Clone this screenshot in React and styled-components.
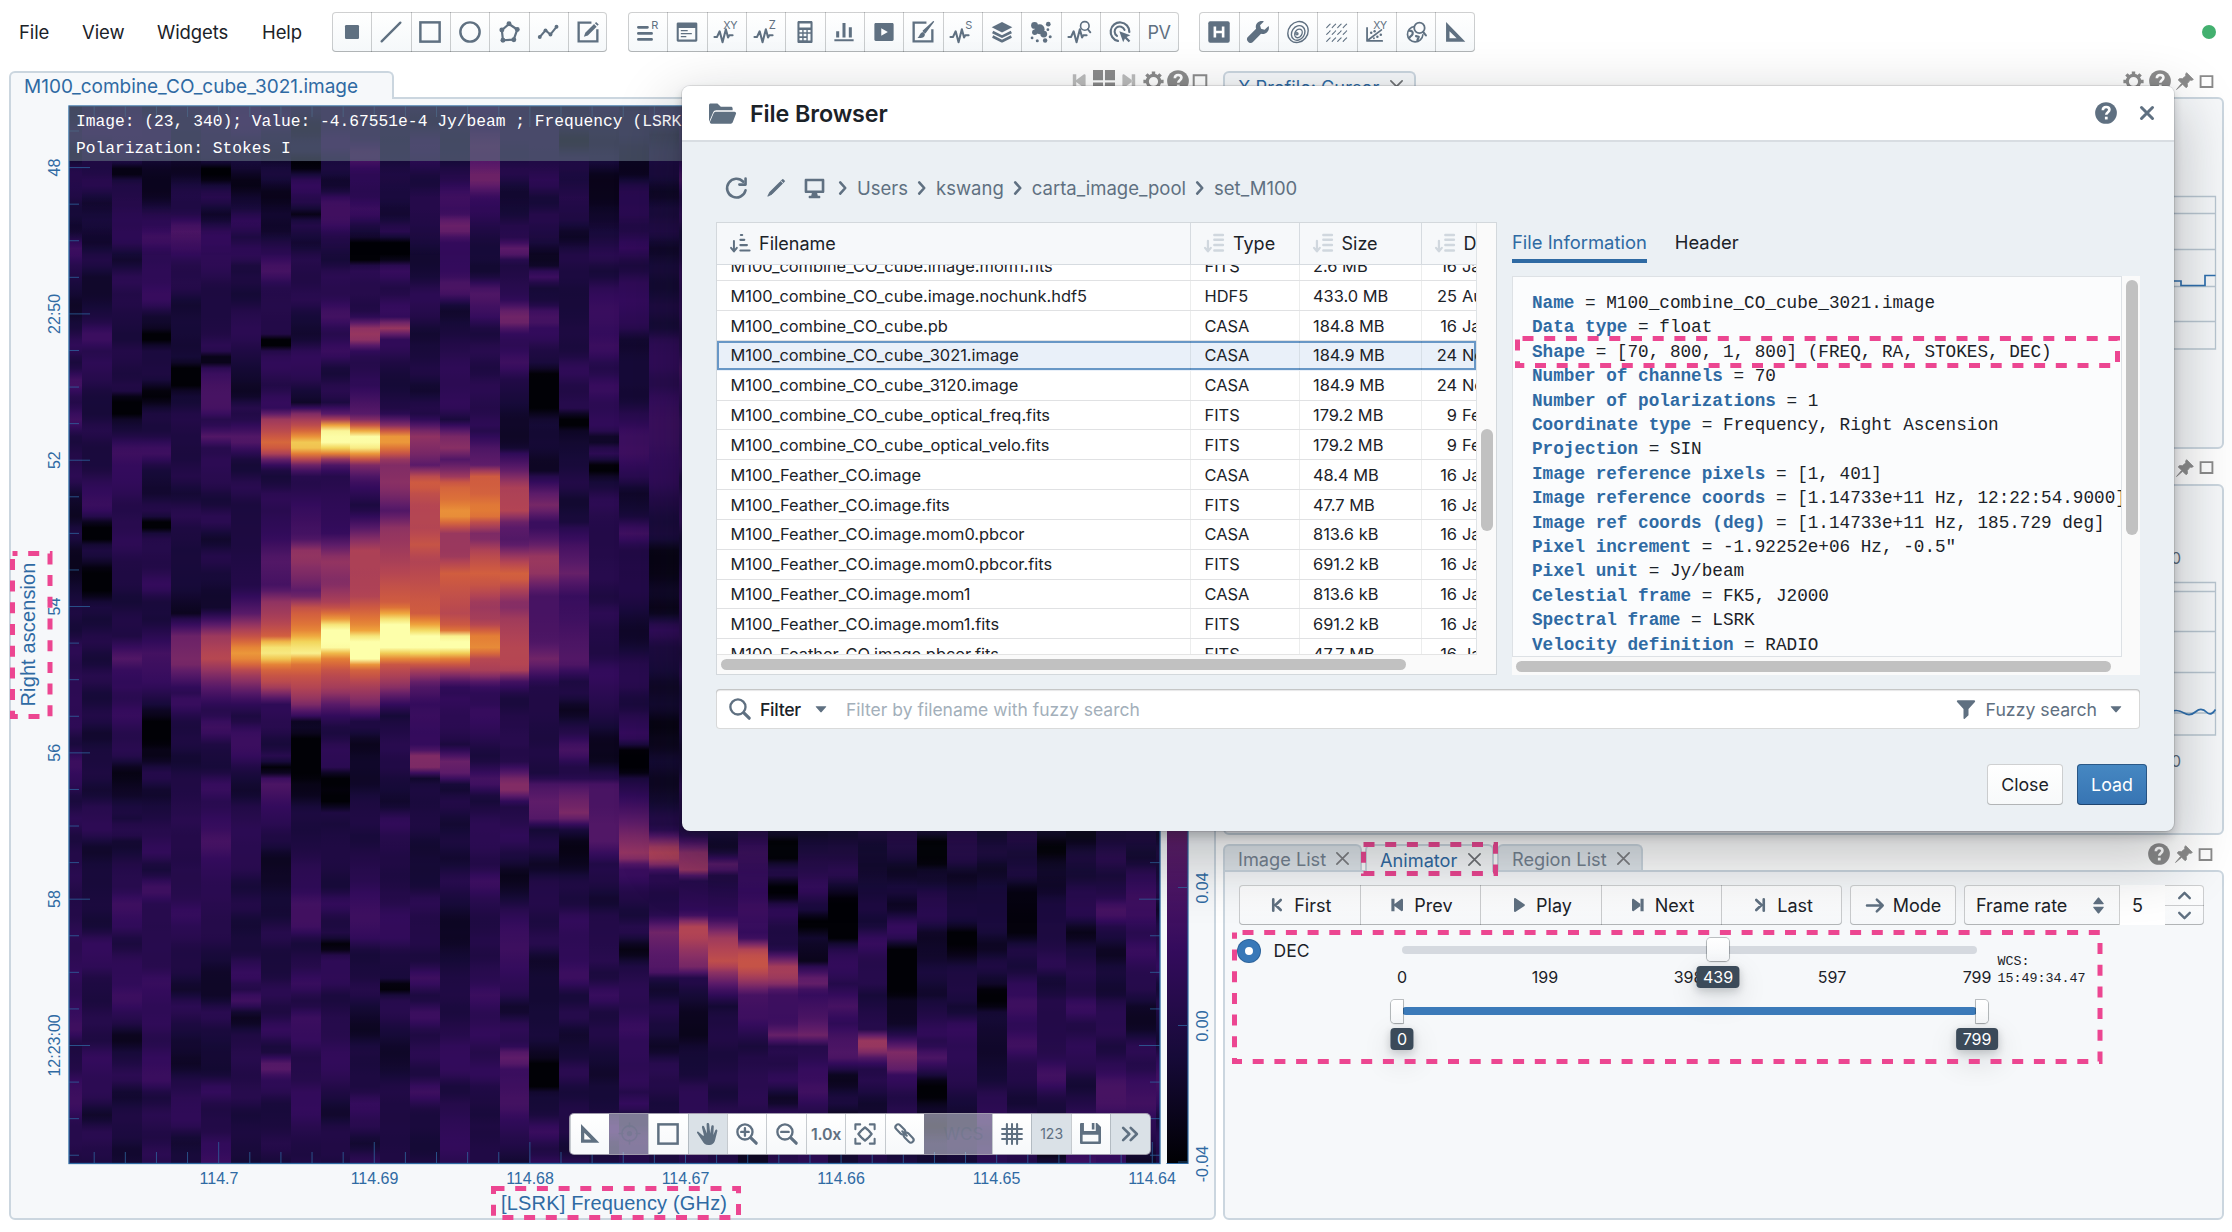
import React from "react";
import styled, { createGlobalStyle } from "styled-components";

const GlobalStyle = createGlobalStyle`
  * { box-sizing: border-box; }
  body { margin: 0; background: #fff; overflow: hidden; }
  body, button, input { font-family: Inter, "Liberation Sans", sans-serif; }
  svg { display: block; flex: none; }
`;

const C = {
  icon: "#5f7081",
  text: "#1b2228",
  blue: "#2f6aa3",
  border: "#cbd6df",
  panel: "#f6f8fa",
  pink: "#ec4691",
  control: "inset 0 0 0 1px rgba(16,22,26,.2), inset 0 -1px 0 rgba(16,22,26,.12)",
};
const MONO = '"Liberation Mono", "Courier New", monospace';

/* ---------- icons (16 unit grid) ---------- */

const stroke = (w = 1.6, extra = {}) => ({
  fill: "none", stroke: "currentColor", strokeWidth: w, strokeLinecap: "round", strokeLinejoin: "round", ...extra,
});
const sup = (t, x = 9.4, size = 8) => (
  <text x={x} y="5.6" fontSize={size} fontFamily="Inter, sans-serif" fill="currentColor">{t}</text>
);
const pulse = <path d="M.6 10.5h1.8l2-4.2 2.1 8L8.9 4.8l1.6 6 .9-1.6h2.4" {...stroke(1.5)} />;

const ICONS = {
  point: <rect x="2.9" y="2.9" width="10.2" height="10.2" rx="1" />,
  line: <path d="M1.2 14.8L14.8 1.2" {...stroke(1.7)} />,
  rect: <rect x="1" y="1" width="14" height="14" {...stroke(1.8, { strokeLinejoin: "miter" })} />,
  circle: <circle cx="8" cy="8" r="7" {...stroke(1.8)} />,
  polygon: <g><path d="M8 2.2l6 4-2.6 7.3-7.8.5L2.8 6.6z" {...stroke(1.6)} /><circle cx="8" cy="2" r="1.8" /><circle cx="14" cy="6.2" r="1.8" /><circle cx="2.8" cy="6.6" r="1.8" /><circle cx="3.6" cy="14" r="1.8" /><circle cx="11.5" cy="13.6" r="1.8" /></g>,
  polyline: <g><path d="M2 11.6L6.2 6.8l3.6 3 4.4-5.6" {...stroke(1.5)} /><circle cx="2" cy="11.6" r="1.4" /><circle cx="6.2" cy="6.8" r="1.4" /><circle cx="9.8" cy="9.8" r="1.4" /><circle cx="14.2" cy="4.2" r="1.4" /></g>,
  edit: <g><path d="M10.5 1.2H1.2v13.6h13.6V6" {...stroke(1.7, { strokeLinejoin: "miter", strokeLinecap: "butt" })} /><path d="M12.4 2.2l1.9 1.9-6.4 6.4-2.9 1 1-2.9z" /><path d="M13 1.6l.9-.9 1.9 1.9-.9.9z" /></g>,
  brush: <g><path d="M10.5 1.2H1.2v13.6h13.6V6" {...stroke(1.7, { strokeLinejoin: "miter", strokeLinecap: "butt" })} /><path d="M15.6.5l-6 8-1.4-1.2z" {...stroke(1)} fill="currentColor" /><path d="M8 8c1.4.6 1.8 1.8 1 3-1 1.3-3.3 1.6-5 1.3C5.5 11.4 5.5 8.6 8 8z" /></g>,
  listR: <g><path d="M1 4.6h6.6M1 9h9.6M1 13.400h9.600" {...stroke(2)} />{sup("R", 10.4, 8)}</g>,
  log: <path fillRule="evenodd" d="M1.5 1h13c.6 0 1 .4 1 1v12c0 .6-.4 1-1 1h-13c-.6 0-1-.4-1-1V2c0-.6.4-1 1-1zm.5 4v8.500h12V5zM3.500 6.500h5v1h-5zm0 2.200h8v1h-8zm0 2.200h4v1h-4z" />,
  profXY: <g><g transform="translate(-1 1.200)">{pulse}</g>{sup("XY", 6, 7.800)}</g>,
  profZ: <g><g transform="translate(-1 1.200)">{pulse}</g>{sup("Z", 10, 8.200)}</g>,
  profS: <g><g transform="translate(-1 1.200)">{pulse}</g>{sup("S", 10.300, 8)}</g>,
  profQ: <g><g transform="translate(-1 1.200)">{pulse}</g><circle cx="11.500" cy="3.600" r="3.100" {...stroke(1.200)} fill="#fbfcfd" /><path d="M13.700 6l1.800 2.200" {...stroke(1.400)} /></g>,
  calc: <path fillRule="evenodd" d="M3.500 0h9c.6 0 1 .4 1 1v14c0 .6-.4 1-1 1h-9c-.6 0-1-.4-1-1V1c0-.6.4-1 1-1zM4 1.800v3h8v-3zM4 6.500v1.700h2V6.500zm3 0v1.700h2V6.500zm3 0v1.700h2V6.500zM4 9.300V11h2V9.300zm3 0V11h2V9.300zm3 0v4.800h2V9.300zM4 12.300V14h2v-1.700zm3 0V14h2v-1.700z" />,
  bars: <path d="M1 13.200h14v1.600H1zM2.300 7.500h2.200V12H2.300zM6.900 1.500h2.200V12H6.900zM11.500 4.500h2.200V12h-2.200z" />,
  video: <path fillRule="evenodd" d="M2 1.500h12c.6 0 1 .4 1 1v11c0 .6-.4 1-1 1H2c-.6 0-1-.4-1-1v-11c0-.6.4-1 1-1zm4 3.700v5.600l4.800-2.800z" />,
  layers: <g><path d="M8 .8l7.500 3.800L8 8.400.5 4.600z" /><path d="M1.200 8L8 11.400 14.800 8M1.200 11.300L8 14.700l6.800-3.400" {...stroke(1.900, { strokeLinecap: "butt" })} /></g>,
  cells: <g><circle cx="3.300" cy="3.200" r="2.500" /><circle cx="7" cy="6" r="3.600" /><circle cx="10" cy="9.500" r="2.500" /><circle cx="3.500" cy="8.200" r="2" /><circle cx="13.300" cy="2.300" r="1.700" /><circle cx="13" cy="6.300" r="1" /><circle cx="11" cy="14.200" r="1.600" /><circle cx="14.700" cy="11.500" r="1.100" /><circle cx="1.500" cy="12.300" r="1" /><circle cx="5.300" cy="14.300" r="1.100" /></g>,
  target: <g><path d="M6.500 14.500A6.800 6.800 0 1 1 14.800 8" {...stroke(1.600)} /><path d="M5.800 10.800A3.700 3.700 0 1 1 11.300 6.500" {...stroke(1.500)} /><path d="M7.500 7.500l8 2.800-2.700 1.300 2.700 2.700-1.200 1.200-2.700-2.700L10.300 15.500z" /></g>,
  header: <g><rect x=".2" y=".2" width="15.600" height="15.600" rx="1.400" /><path d="M5 4v8M11 4v8M5 8h6" stroke="#fff" strokeWidth="1.900" fill="none" /></g>,
  wrench: <path d="M15.700 3.700l-2.900 2.700-2.600-.7-.7-2.600L12.300.3C10.700-.3 8.800.1 7.600 1.300 6.400 2.500 6.100 4.200 6.600 5.700L.8 11.500a2.200 2.200 0 0 0 0 3.500 2.200 2.200 0 0 0 3.500.2l5.900-5.900c1.500.5 3.200.1 4.400-1.100 1.300-1.200 1.700-3 1.100-4.500z" />,
  contour: <g {...stroke(1)}><ellipse cx="8" cy="8" rx="8" ry="7" transform="rotate(-50 8 8)" /><ellipse cx="7.500" cy="8.500" rx="5.600" ry="4.600" transform="rotate(-55 8 8)" /><ellipse cx="7.300" cy="8.800" rx="3.300" ry="2.500" transform="rotate(-60 8 8)" /><circle cx="7.200" cy="9.300" r=".8" /></g>,
  vector: <path d="M.5 4.800L3 2.200M4.500 4.800L7 2.200M8.500 4.800L11 2.200M12.500 4.800L15 2.200M.5 9.800L3 7.200M4.500 9.800L7 7.200M8.500 9.800L11 7.200M12.500 9.800L15 7.200M.5 14.800L3 12.200M4.500 14.800L7 12.200M8.500 14.800l2.500-2.600M12.500 14.800l2.500-2.600" {...stroke(.8, { strokeDasharray: "2.2 .6" })} />,
  scatter: <g><path d="M1.500 5v9.500h11" {...stroke(1.300)} /><path d="M2 14L12 6.500" {...stroke(1.200)} /><circle cx="4.500" cy="8.500" r=".9" /><circle cx="7" cy="7.500" r=".9" /><circle cx="9" cy="11.500" r=".9" /><circle cx="11.500" cy="10" r=".9" /><circle cx="6.500" cy="12.500" r=".7" />{sup("XY", 6, 7.600)}</g>,
  globe: <g><path d="M7 4a5.600 5.600 0 1 0 6 6" {...stroke(1.200)} /><path d="M3 7c2 0 3 1 2.500 2.500S3.500 11 3.500 12M8 11l2 .5L9 14" {...stroke(1.600)} /><circle cx="10.500" cy="5" r="3.800" {...stroke(1.300)} fill="#fbfcfd" /><path d="M13.200 8l2 2.500" {...stroke(1.500)} /></g>,
  setsquare: <path fillRule="evenodd" d="M1.500.8L15.500 15H1.500zM4 7.500v5h5.200z" />,
  aim: <g><circle cx="8" cy="8" r="5.800" {...stroke(1.200)} /><circle cx="8" cy="8" r="2" /><path d="M8 0v3M8 13v3M0 8h3M13 8h3" {...stroke(1.200)} /></g>,
  hand: <path d="M4.200 9L1 6.300c-.7-.6-1.300.3-.9.9l4.200 6.500C5 15.200 6 16 8.300 16c3 0 4.500-1.500 5-4.200l1.500-6c.2-1.200-1.200-1.500-1.500-.5l-1.400 3.500.3-6.200c0-1.300-1.700-1.300-1.800 0L9.600 7.600 8.900 1C8.700-.3 6.900-.2 7 1.100l.2 6.500-2-5C4.800 1.500 3.300 2 3.600 3.200l1.500 6z" />,
  zoomIn: <g><circle cx="6.500" cy="6.500" r="5.500" {...stroke(1.700)} /><path d="M10.800 10.800l3.900 3.900" {...stroke(2.300)} /><path d="M3.800 6.500h5.400M6.500 3.800v5.400" {...stroke(1.700)} /></g>,
  zoomOut: <g><circle cx="6.500" cy="6.500" r="5.500" {...stroke(1.700)} /><path d="M10.800 10.800l3.900 3.900" {...stroke(2.300)} /><path d="M3.800 6.500h5.400" {...stroke(1.700)} /></g>,
  search: <g><circle cx="6.500" cy="6.500" r="5.500" {...stroke(1.700)} /><path d="M10.800 10.800l3.900 3.900" {...stroke(2.300)} /></g>,
  fit: <g><path d="M1 4.500V1h3.500M11.500 1H15v3.500M15 11.500V15h-3.500M4.500 15H1v-3.500" {...stroke(1.500)} /><path d="M5.700 5.200L8 3.200l2.300 2M5.700 10.800L8 12.800l2.300-2M5.200 5.700L3.200 8l2 2.300M10.800 5.700l2 2.300-2 2.300" {...stroke(1.700)} /></g>,
  link: <g {...stroke(1.600)}><rect x=".4" y="2.700" width="8.800" height="4.200" rx="2.100" transform="rotate(45 4.800 4.800)" /><rect x="6.800" y="9.100" width="8.800" height="4.200" rx="2.100" transform="rotate(45 11.200 11.200)" /><path d="M6.300 6.300l3.400 3.400" /></g>,
  grid: <path d="M4.300.8v14.400M8 .8v14.400M11.700.8v14.400M.8 4.300h14.400M.8 8h14.400M.8 11.700h14.400" {...stroke(1.500)} />,
  save: <path fillRule="evenodd" d="M1 0h2v6h9V0h1l3 3v12c0 .6-.4 1-1 1H1c-.6 0-1-.4-1-1V1c0-.6.4-1 1-1zm8 0h2v5H9zM2 9v5h12V9z" />,
  more: <path d="M3 3.500L7.500 8 3 12.500M8.500 3.500L13 8l-4.500 4.500" {...stroke(1.900)} />,
  folder: <path d="M0 3c0-.6.4-1 1-1h4l2 2h6c.6 0 1 .4 1 1v1H4.300c-.9 0-1.500.5-1.800 1.200L0 13zM4.300 7H15c.8 0 1.200.6 1 1.200l-2 5.200c-.2.4-.6.6-1 .6H1.500c-.7 0-1.100-.5-.9-1.100l2.200-5.200C3.100 7.300 3.600 7 4.300 7z" />,
  help: <g><circle cx="8" cy="8" r="7.900" /><path d="M5.700 6c0-1.500 1-2.400 2.400-2.400S10.500 4.500 10.500 5.700c0 1.700-2.300 1.800-2.300 3.600" fill="none" stroke="#fff" strokeWidth="1.900" /><rect x="7.200" y="10.700" width="2" height="2" fill="#fff" /></g>,
  cross: <path d="M4 4l8 8M12 4l-8 8" {...stroke(2.200)} />,
  thinCross: <path d="M2 2l12 12M14 2L2 14" {...stroke(1.800)} />,
  refresh: <g><path d="M14.300 9.200A6.500 6.500 0 1 1 12.700 3.300" {...stroke(1.800)} /><path d="M14.300 1v4.300H10" {...stroke(1.800)} /></g>,
  pencil: <path d="M12.200 2L14 3.800l-9 9L1.500 14.500 3.200 11zM12.900 1.300l.6-.6c.4-.4 1-.3 1.300 0l.5.5c.4.4.4.9 0 1.300l-.6.6z" stroke="currentColor" strokeWidth=".7" />,
  desktop: <path fillRule="evenodd" d="M1.500.5h13c.6 0 1 .4 1 1v9c0 .6-.4 1-1 1H10l.5 2h1c.5 0 1 .4 1 1s-.4 1-1 1h-7c-.6 0-1-.4-1-1s.4-1 1-1h1l.5-2H1.500c-.6 0-1-.4-1-1v-9c0-.6.4-1 1-1zm1 2v7h11v-7z" />,
  chevron: <path d="M5.500 3L10 8l-4.500 5" {...stroke(2.300)} />,
  up: <path d="M3 10.500l5-5 5 5" {...stroke(2.200)} />,
  down: <path d="M3 5.500l5 5 5-5" {...stroke(2.200)} />,
  caret: <path d="M3.800 5.500h8.400c.5 0 .6.5.3.8l-3.900 4.400c-.3.4-.9.4-1.200 0L3.500 6.300c-.3-.3-.2-.8.3-.8z" />,
  doubleCaret: <path d="M3.600 6.800h8.800c.5 0 .7-.5.4-.9L8.600.8c-.3-.4-.9-.4-1.200 0L3.200 5.900c-.3.4-.1.9.4.9zM3.600 9.200h8.800c.5 0 .7.5.4.9l-4.200 5.100c-.3.4-.9.4-1.200 0L3.200 10.100c-.3-.4-.1-.9.4-.9z" />,
  filter: <path d="M1.500 1h13c.7 0 1.100.8.6 1.400L10 8v5l-3 2.800c-.5.4-1 .1-1-.5V8L.9 2.400C.4 1.800.8 1 1.500 1z" />,
  sortAsc: <g><path d="M3 6v7M.8 11.300L3 14l2.200-2.700" {...stroke(1.500)} /><path d="M8.300 1.500h1M7.900 5.200h3M7.900 9.200h5M7.900 13.300h7" {...stroke(1.600)} /></g>,
  sort: <g><path d="M3 6v7M.8 11.300L3 14l2.200-2.700" {...stroke(1.700)} /><path d="M7.900 1.500h6.500M7.900 5.200h6.500M7.900 9.200h6.500M7.900 13.300h6.500" {...stroke(1.900)} /></g>,
  first: <path d="M5 3.500v9M11 4L6.800 8 11 12" {...stroke(2.100)} />,
  last: <path d="M11 3.500v9M5 4l4.200 4L5 12" {...stroke(2.100)} />,
  prev: <path d="M3.500 3h2.500v10H3.500zM12.800 4v8c0 .8-.8 1.200-1.400.8L6 8.800a1 1 0 0 1 0-1.600l5.400-4c.6-.4 1.400 0 1.400.8z" />,
  next: <path d="M10 3h2.500v10H10zM3.200 4v8c0 .8.8 1.200 1.400.8l5.400-4a1 1 0 0 0 0-1.600L4.600 3.200C4 2.800 3.200 3.200 3.200 4z" />,
  play: <path d="M4 3.200v9.600c0 .7.7 1 1.300.6l7-4.700a.8.8 0 0 0 0-1.400l-7-4.700C4.700 2.200 4 2.500 4 3.200z" />,
  arrow: <path d="M1.500 8h12M9 3.500L13.500 8 9 12.500" {...stroke(1.900)} />,
  tiles: <path d="M0 0h7.300v7.500H0zM8.700 0H16v7.500H8.700zM0 9h7.300v7H0zM8.700 9H16v7H8.700z" />,
  gear: <g><circle cx="8" cy="8" r="4.700" {...stroke(2.400)} /><path d="M8 .3v3M8 12.700v3M.3 8h3M12.700 8h3M2.600 2.600l2 2M11.400 11.400l2 2M13.400 2.600l-2 2M4.600 11.400l-2 2" {...stroke(2.600, { strokeLinecap: "butt" })} /></g>,
  pin: <path d="M9.400.6l6 6-1.300.8-1.500-.2-2.600 3.100.1 2.700-1.200.9L5.900 10.900.5 15.500l4.600-5.400-3-3 .9-1.200 2.700.1 3.100-2.600-.2-1.500z" stroke="currentColor" strokeWidth=".8" />,
  box: <path d="M1.700 2.200h12.600v11.600H1.700z" {...stroke(2, { strokeLinejoin: "miter" })} />,
};

const Icon = ({ name, size = 21, color = C.icon }) => (
  <svg width={size} height={size} viewBox="0 0 16 16" fill="currentColor" overflow="visible" style={{ color }}>{ICONS[name]}</svg>
);

/* ---------- shared pieces ---------- */

const Screen = styled.div`
  position: relative; width: 2232px; height: 1232px; overflow: hidden;
  display: flex; flex-direction: column; background: #fff; color: ${C.text};
`;
const MenuBar = styled.header`
  height: 71px; padding: 12px 16px 0 19px; display: flex; align-items: flex-start;
`;
const MenuItems = styled.nav`
  width: 313px; height: 40px; display: flex; align-items: center; font-size: 18.5px; letter-spacing: -.1px;
`;
const MenuItem = styled.span`width: ${(p) => p.$w}px;`;
const ButtonGroup = styled.div`
  display: flex; height: 40px; margin-right: 20.5px; border-radius: 4px;
  box-shadow: ${C.control}; background: linear-gradient(#fff, #f5f8fa);
`;
const ToolButton = styled.div`
  width: 39.35px; height: 40px; display: flex; align-items: center; justify-content: center;
  color: ${C.icon}; font-size: 18px; letter-spacing: -.3px;
  & + & { box-shadow: inset 1px 0 0 rgba(16,22,26,.2); }
`;
const StatusDot = styled.i`
  width: 14px; height: 14px; margin: 13px 0 0 auto; border-radius: 50%; background: #43b06f;
`;
const Workspace = styled.main`
  display: flex; gap: 7px; height: 1149px; padding: 0 8px 0 9px;
`;
const Stack = styled.section`
  display: flex; flex-direction: column; width: ${(p) => p.$w}px; height: ${(p) => p.$h}px;
`;
const RightColumn = styled.div`display: flex; flex-direction: column; gap: 9px;`;
const TabBar = styled.div`display: flex; height: 26px; padding-right: ${(p) => p.$right || 10}px; flex: none;`;
const Tab = styled.div`
  position: relative; display: flex; align-items: center; justify-content: space-between; z-index: 1;
  width: ${(p) => p.$w}px; height: ${(p) => (p.$active ? 28 : 26)}px; padding: 1px ${(p) => p.$pr || 10}px 0 13px; margin-right: 3px;
  border: 2px solid ${C.border}; border-bottom: 0; border-radius: 6px 6px 0 0;
  background: ${(p) => (p.$active ? C.panel : "#e0e6eb")}; color: ${(p) => (p.$active ? C.blue : "#748290")};
  font-size: ${(p) => p.$size || 18.200}px; white-space: nowrap;
`;
const TabTools = styled.div`
  margin-left: auto; display: flex; align-items: center; gap: ${(p) => p.$gap || 5}px; height: 20px;
`;
const PanelBody = styled.div`
  position: relative; flex: 1; border: 2px solid ${C.border}; border-radius: 0 6px 6px 6px; background: ${C.panel}; overflow: hidden;
`;
const Highlight = styled.svg`
  position: absolute; left: ${(p) => p.$x}px; top: ${(p) => p.$y}px; overflow: visible; pointer-events: none; z-index: 4;
`;
const DashedBox = ({ x, y, w, h, offset = 0 }) => (
  <Highlight $x={x} $y={y} width={w} height={h}>
    <rect x="2.5" y="2.5" width={w - 5} height={h - 5} fill="none" stroke={C.pink} strokeWidth="5" strokeDasharray="11 10.7" strokeDashoffset={offset} />
  </Highlight>
);

/* ---------- position-velocity raster ---------- */

const MAP = ["#000003", "#160a38", "#330b5c", "#5b1b69", "#8a3064", "#b24454", "#cf5b40", "#e27b36", "#efa43c", "#f2d65c", "#fdffaa"].map((h) => [
  parseInt(h.slice(1, 3), 16), parseInt(h.slice(3, 5), 16), parseInt(h.slice(5, 7), 16),
]);
const inferno = (v) => {
  const t = Math.max(0, Math.min(0.9999, v)) * 10;
  const i = Math.floor(t);
  return `rgb(${MAP[i].map((a, k) => Math.round(a + (MAP[i + 1][k] - a) * (t - i))).join(",")})`;
};
const hash = (a, b) => {
  const s = Math.sin(a * 127.1 + b * 311.7) * 43758.5453;
  return s - Math.floor(s);
};
const smooth = (col, y, cell) => {
  const p = y / cell + hash(col, 7.3);
  const i = Math.floor(p);
  const f = p - i;
  const u = f * f * (3 - 2 * f);
  return hash(col, i) * (1 - u) + hash(col, i + 1) * u;
};
const up = (a) => a.map(([z, v]) => [60 + z / 2.24, v]);
const lo = (a) => a.map(([z, v]) => [700 + z / 2.947, v]);
const EMISSION = {
  2: up([[1280, 0.1], [1340, 0.28], [1400, 0.1]]),
  3: up([[1250, 0.1], [1330, 0.25], [1400, 0.2], [1450, 0.1]]),
  4: up([[1240, 0.1], [1290, 0.34], [1350, 0.37], [1390, 0.24], [1430, 0.1]]),
  5: up([[800, 0.1], [845, 0.28], [880, 0.1], [1230, 0.1], [1290, 0.45], [1340, 0.52], [1380, 0.37], [1420, 0.25], [1470, 0.1]]),
  6: up([[790, 0.1], [850, 0.3], [900, 0.1], [1180, 0.15], [1240, 0.3], [1290, 0.55], [1325, 0.78], [1345, 0.72], [1370, 0.5], [1400, 0.37], [1440, 0.2], [1480, 0.1]]),
  7: up([[780, 0.1], [800, 0.42], [830, 0.52], [855, 0.64], [875, 0.57], [900, 0.25], [925, 0.1], [1070, 0.2], [1120, 0.28], [1180, 0.24], [1215, 0.42], [1260, 0.5], [1290, 0.6], [1308, 0.92], [1335, 0.96], [1350, 0.75], [1370, 0.6], [1400, 0.5], [1440, 0.2]]),
  8: up([[775, 0.15], [795, 0.42], [815, 0.52], [835, 0.68], [855, 0.88], [872, 0.86], [890, 0.58], [910, 0.3], [935, 0.15], [1070, 0.25], [1100, 0.42], [1120, 0.42], [1160, 0.35], [1195, 0.28], [1230, 0.58], [1275, 0.72], [1305, 0.92], [1330, 0.97], [1350, 0.7], [1380, 0.58], [1410, 0.5], [1440, 0.4], [1480, 0.15]]),
  9: up([[770, 0.15], [800, 0.35], [818, 0.8], [832, 1], [862, 1], [880, 0.75], [900, 0.3], [930, 0.15], [1060, 0.2], [1120, 0.42], [1170, 0.37], [1220, 0.5], [1250, 0.75], [1270, 1], [1315, 1], [1340, 0.72], [1370, 0.55], [1410, 0.45], [1440, 0.3], [1480, 0.15]]),
  10: up([[740, 0.2], [800, 0.3], [820, 0.6], [840, 1], [866, 1], [885, 0.72], [905, 0.38], [940, 0.24], [1000, 0.12], [1050, 0.3], [1100, 0.5], [1150, 0.48], [1200, 0.5], [1240, 0.65], [1275, 0.77], [1296, 1], [1342, 1], [1360, 0.65], [1400, 0.48], [1440, 0.37], [1480, 0.15]]),
  11: up([[790, 0.15], [820, 0.4], [842, 0.76], [858, 0.76], [878, 0.6], [900, 0.37], [950, 0.4], [1010, 0.27], [1050, 0.42], [1120, 0.47], [1180, 0.55], [1220, 0.6], [1245, 0.85], [1260, 1], [1318, 1], [1335, 0.8], [1355, 0.57], [1400, 0.42], [1440, 0.22], [1470, 0.1]]),
  12: up([[800, 0.15], [840, 0.42], [880, 0.37], [910, 0.3], [930, 0.52], [950, 0.62], [970, 0.55], [1000, 0.5], [1050, 0.5], [1085, 0.58], [1120, 0.5], [1200, 0.57], [1240, 0.6], [1265, 0.8], [1288, 1], [1322, 1], [1340, 0.75], [1360, 0.52], [1400, 0.28], [1440, 0.2]]).concat(lo([[40, 0.22], [140, 0.2], [165, 0.38], [200, 0.38], [225, 0.13]])),
  13: up([[810, 0.15], [840, 0.36], [870, 0.4], [895, 0.28], [930, 0.42], [950, 0.62], [990, 0.67], [1005, 0.75], [1025, 0.75], [1040, 0.6], [1060, 0.44], [1110, 0.44], [1150, 0.6], [1200, 0.55], [1240, 0.52], [1275, 0.62], [1292, 1], [1322, 1], [1335, 0.77], [1360, 0.52], [1400, 0.2], [1430, 0.1]]).concat(lo([[130, 0.1], [180, 0.33], [220, 0.3], [250, 0.1]])),
  14: up([[830, 0.15], [870, 0.27], [910, 0.32], [930, 0.6], [970, 0.62], [1000, 0.7], [1020, 0.7], [1035, 0.55], [1065, 0.35], [1100, 0.5], [1150, 0.62], [1180, 0.57], [1220, 0.44], [1260, 0.47], [1290, 0.7], [1320, 0.74], [1340, 0.52], [1370, 0.47], [1400, 0.22], [1450, 0.1]]).concat(lo([[170, 0.1], [240, 0.27], [290, 0.1]])),
  15: up([[870, 0.15], [920, 0.32], [955, 0.48], [1010, 0.5], [1040, 0.3], [1080, 0.27], [1125, 0.5], [1155, 0.63], [1190, 0.47], [1220, 0.37], [1250, 0.45], [1320, 0.52], [1365, 0.5], [1390, 0.25], [1430, 0.1]]).concat(lo([[180, 0.15], [240, 0.38], [270, 0.38], [305, 0.15]])),
  16: up([[930, 0.15], [970, 0.3], [1000, 0.36], [1040, 0.2], [1080, 0.3], [1115, 0.44], [1150, 0.42], [1200, 0.25], [1300, 0.27], [1345, 0.36], [1400, 0.15]]).concat(lo([[220, 0.1], [250, 0.25], [300, 0.3], [350, 0.28], [380, 0.1]])),
  17: up([[1040, 0.15], [1090, 0.25], [1150, 0.32], [1200, 0.2], [1350, 0.28], [1400, 0.1]]).concat(lo([[220, 0.1], [250, 0.25], [290, 0.33], [340, 0.38], [380, 0.12]])),
  18: lo([[220, 0.1], [250, 0.25], [300, 0.26], [420, 0.28], [500, 0.1]]),
  19: lo([[220, 0.1], [300, 0.22], [400, 0.35], [460, 0.42], [500, 0.15]]),
  20: lo([[370, 0.1], [430, 0.44], [460, 0.5], [485, 0.37], [515, 0.1], [630, 0.15], [680, 0.35], [750, 0.3], [800, 0.27], [825, 0.1]]),
  21: lo([[390, 0.12], [450, 0.38], [500, 0.42], [530, 0.15], [630, 0.2], [665, 0.5], [695, 0.5], [740, 0.42], [790, 0.35], [825, 0.1]]),
  22: lo([[450, 0.12], [490, 0.33], [520, 0.12], [640, 0.2], [700, 0.45], [775, 0.56], [800, 0.42], [850, 0.25], [900, 0.1]]),
  23: lo([[690, 0.12], [740, 0.53], [780, 0.58], [810, 0.5], [840, 0.38], [870, 0.25], [940, 0.22], [1030, 0.1]]),
  24: lo([[730, 0.12], [790, 0.48], [830, 0.42], [860, 0.22], [950, 0.22], [990, 0.33], [1025, 0.1]]),
  25: lo([[770, 0.12], [830, 0.35], [860, 0.2], [940, 0.25], [990, 0.34], [1030, 0.1]]),
  26: lo([[820, 0.12], [900, 0.25], [950, 0.18], [1000, 0.26], [1050, 0.28], [1100, 0.1]]),
  27: lo([[970, 0.12], [1000, 0.43], [1030, 0.43], [1060, 0.25], [1100, 0.1]]),
  28: lo([[980, 0.12], [1040, 0.38], [1090, 0.3], [1120, 0.1]]),
  29: lo([[1000, 0.1], [1050, 0.27], [1110, 0.1]]),
};
// [column, centre, half height, amplitude]
const PATCHES = [
  [14, 165, 36, 0.15], [14, 300, 30, 0.12], [3, 224, 22, 0.1], [4, 240, 20, 0.08], [5, 245, 24, 0.1], [6, 252, 12, 0.1], [6, 225, 14, 0.06],
  [15, 250, 8, 0.14], [15, 316, 12, 0.14], [16, 276, 7, 0.14], [16, 316, 10, 0.12], [10, 334, 12, 0.24], [11, 328, 7, 0.26], [13, 227, 10, 0.12],
  [13, 290, 12, 0.1], [1, 372, 16, 0.07], [10, 252, 10, -0.25], [11, 250, 12, -0.25], [8, 165, 10, -0.1], [9, 185, 12, -0.1], [8, 214, 6, -0.12],
  [2, 171, 8, -0.12], [5, 172, 8, -0.12], [4, 377, 12, -0.2], [16, 390, 24, -0.25], [3, 337, 7, -0.2], [7, 343, 6, -0.2], [5, 360, 7, -0.16],
  [2, 404, 10, -0.14], [1, 533, 10, -0.2], [3, 525, 7, -0.2], [1, 582, 20, -0.14], [18, 440, 8, -0.14], [18, 468, 8, -0.14], [19, 636, 22, -0.14],
  [17, 420, 7, -0.14], [3, 730, 12, -0.14], [8, 755, 20, -0.14], [7, 769, 8, -0.2], [9, 780, 8, -0.2], [9, 798, 10, -0.16], [19, 760, 18, -0.2],
  [18, 752, 18, -0.12], [24, 850, 12, -0.16], [24, 890, 12, -0.14], [29, 850, 14, -0.16], [26, 922, 22, -0.2], [25, 924, 10, -0.14], [28, 953, 10, -0.16],
  [28, 978, 14, -0.14], [30, 938, 9, -0.16], [16, 1075, 11, -0.3], [9, 946, 8, -0.14], [31, 998, 9, -0.14], [6, 970, 14, 0.1], [6, 1000, 8, 0.08],
  [11, 988, 7, -0.14], [15, 1057, 9, 0.12], [7, 1066, 9, 0.1], [3, 1070, 60, 0.05], [2, 830, 9, 0.1], [5, 820, 40, 0.03], [35, 912, 12, 0.1],
  [36, 930, 50, 0.05], [33, 1080, 20, 0.07], [25, 1080, 16, 0.08], [27, 1085, 12, 0.06], [29, 1088, 16, -0.1], [24, 1095, 12, -0.08], [19, 1104, 8, 0.1],
];
const emissionAt = (col, y) => {
  const pts = EMISSION[col];
  if (!pts) return 0;
  for (let i = 0; i < pts.length - 1; i++) {
    const [a, va] = pts[i];
    const [b, vb] = pts[i + 1];
    if (y >= a && y <= b) return va + ((vb - va) * (y - a)) / (b - a);
  }
  return 0;
};
const PLOT = { x: 69, y: 106, w: 1091, h: 1057 };
const COLW = 29.83;
const valueAt = (col, y) => {
  let v = 0.136 + (smooth(col + 3, y, 19) - 0.5) * 0.12 + (smooth(col + 91, y, 52) - 0.5) * 0.11 + (smooth(Math.floor(col / 2) + 40, y, 80) - 0.5) * 0.06;
  if (col > 23 && y < 1000) v -= 0.02;
  for (const [c, cy, h, a] of PATCHES) if (c === col) v += a * Math.exp(-(Math.abs((y - cy) / h) ** 3));
  v = Math.max(v, 0.005);
  const e = emissionAt(col, y);
  return e > 0.1 ? Math.max(e + (v - 0.13) * 0.12, v * 0.9) : v;
};
const COLUMNS = Array.from({ length: 38 }, (_, c) => {
  const x0 = c === 0 ? PLOT.x : 82 + COLW * (c - 1);
  const x1 = Math.min(82 + COLW * c, PLOT.x + PLOT.w);
  const rows = [];
  for (let y = 0; y <= PLOT.h; y += 5.7) rows.push([y / PLOT.h, inferno(valueAt(c, PLOT.y + y))]);
  return { x: x0, w: x1 - x0, rows };
}).filter((c) => c.w > 0);

const X_TICKS = ["114.7", "114.69", "114.68", "114.67", "114.66", "114.65", "114.64"];
const Y_TICKS = ["48", "22:50", "52", "54", "56", "58", "12:23:00"];

const ChartSvg = styled.svg`
  font-family: "Liberation Sans", Arial, sans-serif; fill: ${C.blue}; font-size: 16px; text-anchor: middle;
`;

// Drawn in page units; the viewBox origin is the inner corner of the panel.
const ImageChart = () => (
  <ChartSvg width="1202" height="1119" viewBox="11 99 1202 1119">
    <defs>
      {COLUMNS.map((c, i) => (
        <linearGradient key={i} id={`col${i}`} x1="0" y1="0" x2="0" y2="1">
          {c.rows.map(([o, f], k) => <stop key={k} offset={o} stopColor={f} />)}
        </linearGradient>
      ))}
      <linearGradient id="bar" x1="0" y1="0" x2="0" y2="1">
        {Array.from({ length: 21 }, (_, i) => <stop key={i} offset={i / 20} stopColor={inferno(1 - i / 20)} />)}
      </linearGradient>
    </defs>
    <g shapeRendering="crispEdges">
      {COLUMNS.map((c, i) => <rect key={i} x={c.x} y={PLOT.y} width={c.w} height={PLOT.h} fill={`url(#col${i})`} />)}
      <rect x="1167" y="106" width="20.5" height="1057" fill="url(#bar)" />
    </g>
    <g stroke="#2f6fa8" strokeWidth="1" opacity=".7">
      {Array.from({ length: 36 }, (_, i) => {
        const x = 94.2 + i * 31.12;
        if (x > 1158) return null;
        const len = (i - 4) % 5 === 0 ? 21 : 11;
        return <path key={i} d={`M${x} 1163v${-len}M${x} 106v${len}`} />;
      })}
      {Array.from({ length: 29 }, (_, i) => {
        const y = 131 + i * 36.58;
        if (y > 1160) return null;
        const len = (i - 1) % 4 === 0 ? 21 : 10;
        return <path key={i} d={`M69 ${y}h${len}M1160 ${y}h${-len}`} />;
      })}
      {[887.5, 1025.5, 1162].map((y) => <path key={y} d={`M1178 ${y}h9`} />)}
    </g>
    <rect x="69" y="106" width="1091" height="1057.5" fill="none" stroke="#2f6aa3" strokeWidth="1.300" />
    <path d="M1166.500 1163.500h21.500V106" fill="none" stroke="#2f6aa3" strokeWidth="1.200" />
    {X_TICKS.map((t, i) => <text key={t} x={219 + i * 155.5} y="1184">{t}</text>)}
    {Y_TICKS.map((t, i) => (
      <text key={t} transform={`translate(60 ${167.6 + i * 146.3}) rotate(-90)`}>{t}</text>
    ))}
    {[["0.04", 888], ["0.00", 1026], ["-0.04", 1164]].map(([t, y]) => (
      <text key={t} transform={`translate(1208 ${y}) rotate(-90)`}>{t}</text>
    ))}
    <text fontSize="20" transform="translate(34.500 634.500) rotate(-90)" textLength="144">Right ascension</text>
    <text fontSize="20" x="614" y="1210" textLength="226">[LSRK] Frequency (GHz)</text>
  </ChartSvg>
);

const CursorInfo = styled.div`
  position: absolute; left: 58px; top: 7px; width: 1091px; height: 55px; padding: 1.5px 7px 0;
  background: rgba(92,104,122,.68); color: #fff; font: 16.27px/27px ${MONO}; white-space: pre; overflow: hidden;
`;
const ImageToolbar = styled.div`
  position: absolute; left: 558.5px; top: 1014.5px; height: 40.5px; display: flex; border-radius: 4px; overflow: hidden;
  background: rgba(230,236,242,.5); box-shadow: 0 0 0 1px rgba(190,190,196,.8);
`;
const ImageTool = styled.div`
  width: ${(p) => p.$w || 39.400}px; display: flex; align-items: center; justify-content: center; overflow: hidden;
  border-left: 1px solid rgba(120,130,140,.4); color: ${C.icon};
  font-size: ${(p) => p.$size || 16}px; font-weight: ${(p) => p.$bold ? 600 : 400}; letter-spacing: ${(p) => p.$bold ? -0.3 : 0}px;
  background: ${(p) => ({ on: "#dae1e7", off: "transparent" }[p.$state] || "linear-gradient(#fff,#f6f8fa)")};
  opacity: ${(p) => (p.$state === "off" ? 0.3 : 1)};
`;

/* ---------- right hand plots ---------- */

const PlotSvg = styled.svg`position: absolute; right: 0; top: 0;`;

const ProfilePlot = () => (
  <PlotSvg width="200" height="347" viewBox="2025 99 200 347">
    <path d="M2022 196.500h196.500v152.500H2022M2022 213.500h196M2022 249.500h196M2022 286.500h196M2022 321.500h196" fill="none" stroke="#b9c6d1" strokeWidth="1.300" />
    <path d="M2160 281h24v4.500h24v-10h10.500" fill="none" stroke="#2f6fae" strokeWidth="1.700" />
  </PlotSvg>
);
const SpatialPlot = () => (
  <PlotSvg width="200" height="347" viewBox="2025 486 200 347">
    <path d="M2022 582.500h196.500v152.500H2022M2022 591.500h196M2022 631.500h196M2022 672.500h196M2022 713h196" fill="none" stroke="#b9c6d1" strokeWidth="1.300" />
    <path d="M2174 711.500c6-2 9-1 13 1.500s8 2 12-1.500 8-2 11 1 6 1 8.500-3" fill="none" stroke="#2f6fae" strokeWidth="1.700" />
    <text x="2174" y="564" fontSize="16" fontFamily="Inter, sans-serif" fill={C.icon}>0</text>
    <text x="2174" y="767" fontSize="16" fontFamily="Inter, sans-serif" fill={C.icon}>0</text>
  </PlotSvg>
);

/* ---------- animator ---------- */

const AnimatorBody = styled.div`padding: 13px 12px 0 14px;`;
const ControlRow = styled.div`display: flex; gap: 8px; height: 40px;`;
const ControlGroup = styled.div`
  display: flex; height: 40px; border-radius: 4px; box-shadow: ${C.control}; background: linear-gradient(#fff, #f6f8fa);
`;
const Control = styled.div`
  width: ${(p) => p.$w}px; display: flex; align-items: center; justify-content: ${(p) => p.$justify || "center"};
  padding: 0 ${(p) => p.$pad || 0}px; gap: 7px; font-size: 18px; white-space: nowrap;
  & + & { box-shadow: inset 1px 0 0 rgba(16,22,26,.2); }
`;
const NumberInput = styled(Control)`background: #fff; box-shadow: inset 0 0 0 1px rgba(16,22,26,.18);`;
const Stepper = styled.div`
  width: 39.5px; display: flex; flex-direction: column; align-items: center;
  & > div { height: 20px; width: 100%; display: flex; align-items: center; justify-content: center; }
  & > div + div { box-shadow: inset 0 1px 0 rgba(16,22,26,.2); }
`;
const SliderRow = styled.div`display: flex; height: 130px; padding-top: 13px;`;
const Radio = styled.i`
  width: 22px; height: 22px; margin: 2px 0 0 -1px; border-radius: 50%; border: 7px solid #3878b8; background: #fff; box-shadow: 0 0 0 1px #2c639b;
`;
const AxisName = styled.span`width: 128.5px; margin: 1px 0 0 13.500px; font-size: 17.500px; line-height: 24px;`;
const Sliders = styled.div`width: 575px;`;
const Slider = styled.div`position: relative; height: 61.5px;`;
const Track = styled.div`
  position: absolute; left: 0; right: 0; top: 7.5px; height: 8px; border-radius: 4px; background: ${(p) => (p.$on ? "#3b7ab9" : "#d5d9df")};
`;
const Handle = styled.div`
  position: absolute; top: 0; left: ${(p) => p.$x}px; width: ${(p) => p.$w || 22}px; height: 23px; background: linear-gradient(#fff,#f5f7f9);
  border-radius: ${(p) => p.$r || "4px"}; box-shadow: 0 0 0 1px rgba(16,22,26,.25), 0 1px 2px rgba(16,22,26,.2);
`;
const Tick = styled.span`
  position: absolute; top: 29px; left: ${(p) => p.$x}px; transform: translateX(-50%); font-size: 16px; line-height: 20px;
`;
const Bubble = styled.span`
  position: absolute; top: 28px; left: ${(p) => p.$x}px; transform: translateX(-50%); height: 22px; padding: 0 6.5px;
  border-radius: 4px; background: #3b4a59; color: #fff; font-size: 16px; line-height: 22px;
  box-shadow: 0 3px 8px rgba(16,22,26,.2), 0 10px 30px rgba(16,22,26,.14);
`;
const Wcs = styled.div`margin: 15px 0 0 20.5px; font: 13.35px/17px ${MONO}; white-space: pre;`;

/* ---------- file browser ---------- */

const Dialog = styled.div`
  position: absolute; z-index: 5; left: 682px; top: 86px; width: 1492px; height: 745px; border-radius: 8px; background: #ebf0f4;
  display: flex; flex-direction: column;
  box-shadow: 0 0 0 1px rgba(16,22,26,.1), 0 5px 10px rgba(16,22,26,.22), 0 24px 60px 8px rgba(16,22,26,.24);
`;
const DialogHeader = styled.div`
  height: 56px; padding: 0 16px 0 27px; display: flex; align-items: center; background: #fff; border-radius: 8px 8px 0 0;
  border-bottom: 2px solid #d8dde2;
`;
const DialogTitle = styled.h1`margin: 0 auto 0 14px; font-size: 23.3px; font-weight: 600; letter-spacing: -.1px;`;
const DialogActions = styled.div`display: flex; align-items: center; gap: 19px;`;
const DialogContent = styled.div`padding: 30px 34px 0 34px; display: flex; flex-direction: column;`;
const Breadcrumbs = styled.div`
  display: flex; align-items: center; height: 32px; padding-left: 9px; color: ${C.icon}; font-size: 18.5px;
`;
const Crumb = styled.span`margin: 0 5px 0 5px;`;
const IconSlot = styled.span`width: ${(p) => p.$w}px; display: flex;`;
const Panes = styled.div`display: flex; margin-top: 18px; height: 453px;`;

const TableBox = styled.div`
  width: 782px; height: 453px; border: 1.5px solid #d3d8dc; background: #fafafa; display: flex; flex-direction: column; margin-right: 15px;
`;
const TableMain = styled.div`display: flex; height: 432px;`;
const TableView = styled.div`width: 760px; height: 432px; overflow: hidden; background: #fff; border-right: 1px solid #dfe3e6; border-bottom: 1px solid #e4e4e4;`;
const GRID = "474px 108.5px 122px 150px";
const HeadRow = styled.div`
  display: grid; grid-template-columns: ${GRID}; height: 41.5px; background: #f6f8fa; border-bottom: 1.5px solid #d6dbe0; position: relative; z-index: 1;
`;
const HeadCell = styled.div`
  display: flex; align-items: center; gap: 8px; padding-left: 13px; border-right: 1.5px solid #d6dbe0; font-size: 18px; white-space: nowrap;
`;
const Rows = styled.div`margin-top: -13px;`;
const Row = styled.div`
  display: grid; grid-template-columns: ${GRID}; height: 29.83px; font-size: 16.4px; white-space: nowrap;
  background: ${(p) => (p.$selected ? "#e9f0f9" : "#fff")}; border-bottom: 1.5px solid #e0e1e3;
  ${(p) => p.$selected && "box-shadow: inset 0 0 0 2px #6897c6; border-bottom-color: transparent; position: relative;"}
`;
const Cell = styled.div`
  display: flex; align-items: center; padding-left: 13.5px; border-right: 1px solid rgba(16,22,26,.08); overflow: hidden;
`;
const Day = styled.span`width: 22px; text-align: right; margin-right: 5px;`;
const ScrollRail = styled.div`width: 18px; padding: ${(p) => p.$top}px 0 0 4px;`;
const ScrollFoot = styled.div`height: 18px; padding: 4px 0 0 3.5px;`;
const Thumb = styled.div`width: ${(p) => p.$w}px; height: ${(p) => p.$h}px; border-radius: 6px; background: #c1c1c1;`;

const InfoPane = styled.div`width: 628px; display: flex; flex-direction: column;`;
const InfoTabs = styled.div`display: flex; gap: 28px; height: 54px; font-size: 18.4px;`;
const InfoTab = styled.div`
  height: 40.5px; line-height: 40px; color: ${(p) => (p.$active ? C.blue : C.text)};
  border-bottom: 4px solid ${(p) => (p.$active ? C.blue : "transparent")};
`;
const InfoFrame = styled.div`display: flex; width: 628px; background: #fafafa;`;
const InfoText = styled.div`
  width: 610px; height: 380.5px; padding: 14px 0 0 19px; background: #fbfcfd; border: 1.5px solid #dde1e5; overflow: hidden;
  font: 17.68px/24.4px ${MONO}; white-space: pre;
  b { color: ${C.blue}; }
`;
const FilterBar = styled.div`
  display: flex; align-items: center; height: 40px; margin-top: 14px; padding: 0 15px 0 13px; border-radius: 4px; background: #fff;
  box-shadow: inset 0 0 0 1px rgba(16,22,26,.16), inset 0 2px 1px rgba(16,22,26,.1); font-size: 17.7px;
`;
const FilterLabel = styled.span`width: 52px; margin-left: 9px; font-weight: 500; letter-spacing: -.3px;`;
const Placeholder = styled.span`margin-left: 16px; color: #a3afba; font-size: 17.5px;`;
const FilterMode = styled.span`
  margin-left: auto; display: flex; align-items: center; gap: 10px; color: ${C.icon};
`;
const Footer = styled.div`display: flex; justify-content: flex-end; gap: 14px; margin: 34.5px -7px 0 0;`;
const FooterButton = styled.button`
  width: ${(p) => p.$w}px; height: 41px; border: 0; border-radius: 4px; padding: 0; font-size: 17.8px;
  color: ${(p) => (p.$primary ? "#fff" : C.text)};
  background: ${(p) => (p.$primary ? "linear-gradient(#4688c2,#3774b3)" : "linear-gradient(#fff,#f7f9fa)")};
  box-shadow: ${(p) => (p.$primary ? "inset 0 0 0 1px rgba(16,42,76,.5), inset 0 -1px 0 rgba(16,22,26,.2)" : C.control)};
`;

const FILES = [
  ["M100_combine_CO_cube.image.mom1.fits", "FITS", "2.6 MB", "16", "Jan"],
  ["M100_combine_CO_cube.image.nochunk.hdf5", "HDF5", "433.0 MB", "25", "Aug"],
  ["M100_combine_CO_cube.pb", "CASA", "184.8 MB", "16", "Jan"],
  ["M100_combine_CO_cube_3021.image", "CASA", "184.9 MB", "24", "Nov"],
  ["M100_combine_CO_cube_3120.image", "CASA", "184.9 MB", "24", "Nov"],
  ["M100_combine_CO_cube_optical_freq.fits", "FITS", "179.2 MB", "9", "Feb"],
  ["M100_combine_CO_cube_optical_velo.fits", "FITS", "179.2 MB", "9", "Feb"],
  ["M100_Feather_CO.image", "CASA", "48.4 MB", "16", "Jan"],
  ["M100_Feather_CO.image.fits", "FITS", "47.7 MB", "16", "Jan"],
  ["M100_Feather_CO.image.mom0.pbcor", "CASA", "813.6 kB", "16", "Jan"],
  ["M100_Feather_CO.image.mom0.pbcor.fits", "FITS", "691.2 kB", "16", "Jan"],
  ["M100_Feather_CO.image.mom1", "CASA", "813.6 kB", "16", "Jan"],
  ["M100_Feather_CO.image.mom1.fits", "FITS", "691.2 kB", "16", "Jan"],
  ["M100_Feather_CO.image.pbcor.fits", "FITS", "47.7 MB", "16", "Jan"],
];
const INFO = [
  ["Name", "M100_combine_CO_cube_3021.image"],
  ["Data type", "float"],
  ["Shape", "[70, 800, 1, 800] (FREQ, RA, STOKES, DEC)"],
  ["Number of channels", "70"],
  ["Number of polarizations", "1"],
  ["Coordinate type", "Frequency, Right Ascension"],
  ["Projection", "SIN"],
  ["Image reference pixels", "[1, 401]"],
  ["Image reference coords", "[1.14733e+11 Hz, 12:22:54.9000]"],
  ["Image ref coords (deg)", "[1.14733e+11 Hz, 185.729 deg]"],
  ["Pixel increment", '-1.92252e+06 Hz, -0.5"'],
  ["Pixel unit", "Jy/beam"],
  ["Celestial frame", "FK5, J2000"],
  ["Spectral frame", "LSRK"],
  ["Velocity definition", "RADIO"],
];
const TOOLBARS = [
  ["point", "line", "rect", "circle", "polygon", "polyline", "edit"],
  ["listR", "log", "profXY", "profZ", "calc", "bars", "video", "brush", "profS", "layers", "cells", "profQ", "target", "PV"],
  ["header", "wrench", "contour", "vector", "scatter", "globe", "setsquare"],
];
const GREY = "#8b8b8b";

const FileBrowser = () => (
  <Dialog>
    <DialogHeader>
      <Icon name="folder" size={27} />
      <DialogTitle>File Browser</DialogTitle>
      <DialogActions><Icon name="help" size={22} /><Icon name="cross" size={22} /></DialogActions>
    </DialogHeader>
    <DialogContent>
      <Breadcrumbs>
        <IconSlot $w={41}><Icon name="refresh" size={23} /></IconSlot>
        <IconSlot $w={38}><Icon name="pencil" size={19} /></IconSlot>
        <IconSlot $w={30}><Icon name="desktop" size={21} /></IconSlot>
        {["Users", "kswang", "carta_image_pool", "set_M100"].map((c) => (
          <React.Fragment key={c}><Icon name="chevron" size={18} /><Crumb>{c}</Crumb></React.Fragment>
        ))}
      </Breadcrumbs>
      <Panes>
        <TableBox>
          <TableMain>
            <TableView>
              <HeadRow>
                <HeadCell><Icon name="sortAsc" />Filename</HeadCell>
                <HeadCell><Icon name="sort" color="#d0d7de" />Type</HeadCell>
                <HeadCell><Icon name="sort" color="#d0d7de" />Size</HeadCell>
                <HeadCell><Icon name="sort" color="#d0d7de" />Date</HeadCell>
              </HeadRow>
              <Rows>
                {FILES.map(([name, type, size, day, month], i) => (
                  <Row key={name} $selected={i === 3}>
                    <Cell>{name}</Cell>
                    <Cell>{type}</Cell>
                    <Cell>{size}</Cell>
                    <Cell><Day>{day}</Day>{month}</Cell>
                  </Row>
                ))}
              </Rows>
            </TableView>
            <ScrollRail $top={206}><Thumb $w={11.5} $h={102} /></ScrollRail>
          </TableMain>
          <ScrollFoot><Thumb $w={685} $h={11} /></ScrollFoot>
        </TableBox>
        <InfoPane>
          <InfoTabs><InfoTab $active>File Information</InfoTab><InfoTab>Header</InfoTab></InfoTabs>
          <InfoFrame>
            <InfoText>{INFO.map(([k, v]) => <div key={k}><b>{k}</b> = {v}</div>)}</InfoText>
            <ScrollRail $top={4}><Thumb $w={11.5} $h={255} /></ScrollRail>
          </InfoFrame>
          <InfoFrame><ScrollFoot><Thumb $w={595} $h={11} /></ScrollFoot></InfoFrame>
        </InfoPane>
      </Panes>
      <FilterBar>
        <Icon name="search" size={22} />
        <FilterLabel>Filter</FilterLabel>
        <Icon name="caret" size={18} />
        <Placeholder>Filter by filename with fuzzy search</Placeholder>
        <FilterMode><Icon name="filter" size={20} />Fuzzy search<Icon name="caret" size={18} /></FilterMode>
      </FilterBar>
      <Footer>
        <FooterButton $w={76}>Close</FooterButton>
        <FooterButton $w={70} $primary>Load</FooterButton>
      </Footer>
    </DialogContent>
    <DashedBox x={833} y={250} w={605} h={32} offset={-5} />
  </Dialog>
);

const Animator = () => (
  <Stack $w={1001} $h={376}>
    <TabBar $right={11}>
      <Tab $w={139}>Image List<Icon name="thinCross" size={15} color="#7d7f82" /></Tab>
      <Tab $w={129} $active>Animator<Icon name="thinCross" size={15} color="#6f7275" /></Tab>
      <Tab $w={146}>Region List<Icon name="thinCross" size={15} color="#7d7f82" /></Tab>
      <TabTools><Icon name="help" size={22} color={GREY} /><Icon name="pin" size={18} color={GREY} /><Icon name="box" size={15} color={GREY} /></TabTools>
    </TabBar>
    <PanelBody>
      <AnimatorBody>
        <ControlRow>
          <ControlGroup>
            {["First", "Prev", "Play", "Next", "Last"].map((n) => (
              <Control key={n} $w={120.6}><Icon name={n.toLowerCase()} size={20} />{n}</Control>
            ))}
          </ControlGroup>
          <ControlGroup><Control $w={106}><Icon name="arrow" size={21} />Mode</Control></ControlGroup>
          <ControlGroup>
            <Control $w={155} $justify="space-between" $pad={12}>Frame rate<Icon name="doubleCaret" size={17} /></Control>
            <NumberInput $w={46} $justify="flex-start" $pad={13}>5</NumberInput>
            <Stepper><div><Icon name="up" size={17} /></div><div><Icon name="down" size={17} /></div></Stepper>
          </ControlGroup>
        </ControlRow>
        <SliderRow>
          <Radio />
          <AxisName>DEC</AxisName>
          <Sliders>
            <Slider>
              <Track />
              {[["0", 0], ["199", 143], ["398", 286.5], ["597", 430], ["799", 575]].map(([t, x]) => <Tick key={t} $x={x}>{t}</Tick>)}
              <Handle $x={305} />
              <Bubble $x={316}>439</Bubble>
            </Slider>
            <Slider>
              <Track $on />
              <Handle $x={-11} $w={12} $r="4px 0 0 4px" />
              <Handle $x={574} $w={12} $r="0 4px 4px 0" />
              <Bubble $x={0}>0</Bubble>
              <Bubble $x={575}>799</Bubble>
            </Slider>
          </Sliders>
          <Wcs>{"WCS:\n15:49:34.47"}</Wcs>
        </SliderRow>
      </AnimatorBody>
    </PanelBody>
  </Stack>
);

export default function App() {
  return (
    <>
      <GlobalStyle />
      <Screen>
        <MenuBar>
          <MenuItems>
            <MenuItem $w={63}>File</MenuItem><MenuItem $w={75}>View</MenuItem><MenuItem $w={105}>Widgets</MenuItem><MenuItem $w={60}>Help</MenuItem>
          </MenuItems>
          {TOOLBARS.map((group, i) => (
            <ButtonGroup key={i}>
              {group.map((n) => <ToolButton key={n}>{n === "PV" ? n : <Icon name={n} size={22} />}</ToolButton>)}
            </ButtonGroup>
          ))}
          <StatusDot />
        </MenuBar>
        <Workspace>
          <Stack $w={1207} $h={1149}>
            <TabBar $right={8}>
              <Tab $w={385} $active $size={19}>M100_combine_CO_cube_3021.image</Tab>
              <TabTools $gap={3}>
                <Icon name="prev" size={22} color="#bcbcbc" /><Icon name="tiles" size={22} color={GREY} /><Icon name="next" size={22} color="#bcbcbc" />
                <Icon name="gear" size={21} color={GREY} /><Icon name="help" size={22} color={GREY} /><Icon name="box" size={16} color={GREY} />
              </TabTools>
            </TabBar>
            <PanelBody>
              <ImageChart />
              <CursorInfo>{"Image: (23, 340); Value: -4.67551e-4 Jy/beam ; Frequency (LSRK)\nPolarization: Stokes I"}</CursorInfo>
              <ImageToolbar>
                <ImageTool><Icon name="setsquare" /></ImageTool>
                <ImageTool $state="off"><Icon name="aim" /></ImageTool>
                <ImageTool><Icon name="rect" size={22} /></ImageTool>
                <ImageTool $state="on"><Icon name="hand" size={22} /></ImageTool>
                <ImageTool><Icon name="zoomIn" size={22} /></ImageTool>
                <ImageTool><Icon name="zoomOut" size={22} /></ImageTool>
                <ImageTool $bold>1.0x</ImageTool>
                <ImageTool><Icon name="fit" size={22} /></ImageTool>
                <ImageTool><Icon name="link" size={21} /></ImageTool>
                <ImageTool $state="off" $w={68} $size={17}>&nbsp;&nbsp;WCS</ImageTool>
                <ImageTool><Icon name="grid" size={22} /></ImageTool>
                <ImageTool $state="on" $size={14}>123</ImageTool>
                <ImageTool><Icon name="save" /></ImageTool>
                <ImageTool $state="on"><Icon name="more" size={22} /></ImageTool>
              </ImageToolbar>
            </PanelBody>
          </Stack>
          <RightColumn>
            <Stack $w={1001} $h={377.5}>
              <TabBar $right={10}>
                <Tab $w={193} $active>X Profile: Cursor<Icon name="thinCross" size={15} color="#6f7275" /></Tab>
                <TabTools><Icon name="gear" size={21} color={GREY} /><Icon name="help" size={22} color={GREY} /><Icon name="pin" size={18} color={GREY} /><Icon name="box" size={15} color={GREY} /></TabTools>
              </TabBar>
              <PanelBody><ProfilePlot /></PanelBody>
            </Stack>
            <Stack $w={1001} $h={377.5}>
              <TabBar $right={10}>
                <TabTools><Icon name="pin" size={18} color={GREY} /><Icon name="box" size={15} color={GREY} /></TabTools>
              </TabBar>
              <PanelBody><SpatialPlot /></PanelBody>
            </Stack>
            <Animator />
          </RightColumn>
        </Workspace>
        <DashedBox x={10} y={551} w={42.5} h={168} offset={6} />
        <DashedBox x={491} y={1186} w={250} h={34} offset={0} />
        <DashedBox x={1361} y={842} w={137} h={34} offset={0} />
        <DashedBox x={1231.5} y={930} w={870.5} h={134} offset={-8} />
        <FileBrowser />
      </Screen>
    </>
  );
}
